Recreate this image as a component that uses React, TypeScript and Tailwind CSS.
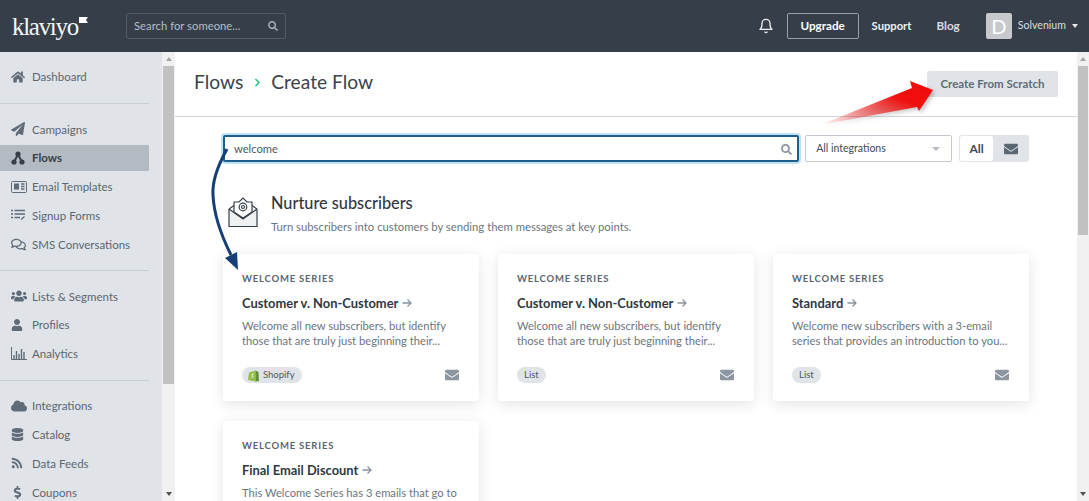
import React from "react";
import {
  FaHome, FaPaperPlane, FaUsers, FaUser, FaCloud, FaDatabase, FaRss, FaDollarSign, FaSearch, FaEnvelope, FaRegComments,
} from "react-icons/fa";
import { FiBell } from "react-icons/fi";

const FONT = "font-['Lato','Open_Sans',sans-serif]";

function FlowsIcon() {
  return (
    <svg width="14" height="14" viewBox="0 0 14 14" fill="none">
      <path d="M7 3.5 3.2 10.5M7 3.5l3.8 7" stroke="#363f49" strokeWidth="2" />
      <circle cx="7" cy="3" r="2.6" fill="#363f49" />
      <circle cx="3" cy="11" r="2.6" fill="#363f49" />
      <circle cx="11" cy="11" r="2.6" fill="#363f49" />
    </svg>
  );
}
function TemplatesIcon() {
  return (
    <svg width="16" height="12" viewBox="0 0 16 12" fill="none" stroke="#5f6b77">
      <rect x="0.5" y="0.5" width="15" height="11" rx="1" />
      <rect x="3" y="2.5" width="5" height="6" fill="#5f6b77" stroke="none" />
      <path d="M10 3h3.500M10 5.500h3.500M10 8h3.500" strokeWidth="1.300" />
    </svg>
  );
}
function FormsIcon() {
  return (
    <svg width="15" height="12" viewBox="0 0 15 12" fill="none" stroke="#5f6b77" strokeWidth="1.300">
      <path d="M0 1.500h2M3.500 1.500H14M0 5h2M3.500 5H14M0 8.500h2M3.500 8.500H9M10 10.500l3.500-3" />
    </svg>
  );
}
function AnalyticsIcon() {
  return (
    <svg width="16" height="13" viewBox="0 0 16 13" fill="none" stroke="#5f6b77">
      <path d="M.5 0v12.500H16" />
      <path d="M3 12V8M5.500 12V4M8 12V7M10.500 12V2M13 12V5" strokeWidth="1.400" />
    </svg>
  );
}

const groups: { label: string; icon: React.ReactNode; active?: boolean }[][] = [
  [{ label: "Dashboard", icon: <FaHome size={14} /> }],
  [
    { label: "Campaigns", icon: <FaPaperPlane size={14} /> },
    { label: "Flows", icon: <FlowsIcon />, active: true },
    { label: "Email Templates", icon: <TemplatesIcon /> },
    { label: "Signup Forms", icon: <FormsIcon /> },
    { label: "SMS Conversations", icon: <FaRegComments size={15} /> },
  ],
  [
    { label: "Lists & Segments", icon: <FaUsers size={16} /> },
    { label: "Profiles", icon: <FaUser size={12} /> },
    { label: "Analytics", icon: <AnalyticsIcon /> },
  ],
  [
    { label: "Integrations", icon: <FaCloud size={16} /> },
    { label: "Catalog", icon: <FaDatabase size={13} /> },
    { label: "Data Feeds", icon: <FaRss size={12} /> },
    { label: "Coupons", icon: <FaDollarSign size={13} /> },
  ],
];

function Sidebar() {
  return (
    <nav className="w-[162px] shrink-0 bg-[#e0e4e8] overflow-hidden">
      <div className="w-[149px]">
        {groups.map((g, i) => (
          <div key={i} className={`pt-[12px] pb-[10.4px] ${i > 0 ? "border-t border-[#c9ced4]" : ""}`}>
            {g.map((it) => (
              <div
                key={it.label}
                className={`h-[26px] mb-[2.75px] flex items-center pl-[11px] text-[11.5px] ${
                  it.active ? "bg-[#b3bac2] text-[#363f49] font-bold" : "text-[#5a6672]"
                }`}
              >
                <span className={`w-[21px] flex justify-start ${it.active ? "text-[#363f49]" : "text-[#5f6b77]"}`}>{it.icon}</span>
                {it.label}
              </div>
            ))}
          </div>
        ))}
      </div>
    </nav>
  );
}

function Scrollbar({ thumb, className }: { thumb: string; className: string }) {
  return (
    <div className={`shrink-0 bg-[#f1f1f1] flex flex-col items-stretch relative ${className}`}>
      <div className="h-[14px] flex items-center justify-center">
        <div className="w-0 h-0 border-x-[3.500px] border-x-transparent border-b-[4px] border-b-[#a3a3a3]" />
      </div>
      <div className={`bg-[#c1c1c1] mx-[1px] ${thumb}`} />
      <div className="flex-1" />
      <div className="h-[14px] flex items-center justify-center">
        <div className="w-0 h-0 border-x-[3.500px] border-x-transparent border-t-[4px] border-t-[#505050]" />
      </div>
    </div>
  );
}

function Card({ title, l1, l2, tag, shopify }: { title: string; l1: string; l2?: string; tag?: string; shopify?: boolean }) {
  return (
    <div className="h-[147px] bg-white rounded-[3px] shadow-[0_3px_14px_rgba(54,63,73,0.14)] px-[19px] pt-[19px] flex flex-col">
      <div className="text-[9.5px] leading-[12px] font-bold tracking-[0.8px] text-[#5a6672]">WELCOME SERIES</div>
      <div className="mt-[9px] h-[18px] text-[12.9px] leading-[18px] font-bold text-[#2f3842] flex items-center">
        {title}
        <svg className="ml-[4px]" width="10" height="10" viewBox="0 0 10 10" fill="none" stroke="#8a939c" strokeWidth="1.300">
          <path d="M.5 5h8.500M5.500 1.500 9 5 5.500 8.500" />
        </svg>
      </div>
      <div className="mt-[7px] text-[11.2px] leading-[14.5px] text-[#6b7580] whitespace-nowrap">
        <div>{l1}</div>
        <div>{l2}</div>
      </div>
      <div className="mt-auto mb-[18px] flex items-center justify-between">
        <span className="h-[16px] rounded-full bg-[#e0e4e8] px-[7px] text-[9.5px] text-[#4d5864] flex items-center">
          {shopify && (
            <svg className="mr-[4px] -ml-[1px]" width="11" height="13" viewBox="0 0 11 13">
              <path d="M1 3.500 7.500 1.500V12.500L0 11z" fill="#95bf47" />
              <path d="M7.500 1.500 10.500 3 11 12 7.500 12.500z" fill="#5e8e3e" />
              <path d="M5.500 5c-1.500-.4-2.200 1-1 1.800 1 .7.500 2-1 1.400" fill="none" stroke="#fff" strokeWidth=".9" />
            </svg>
          )}
          {tag}
        </span>
        <FaEnvelope size={14} className="text-[#8c95a0] mr-[1px]" />
      </div>
    </div>
  );
}

export default function App() {
  return (
    <div className={`h-[501px] w-full overflow-hidden flex flex-col relative bg-white ${FONT}`}>
      <header className="h-[52px] shrink-0 bg-[#363f49] flex items-center pl-[12px] pr-[11px] text-white">
        <div className="w-[114px] flex items-start relative">
          <span className="font-['Liberation_Serif',serif] text-[25px] leading-none tracking-[-1.3px] text-[#f4f5f6]">klaviyo</span>
          <svg className="mt-[3px] ml-[1px]" width="9" height="7" viewBox="0 0 9 7"><path d="M0 0h9L7 3l2 3H0z" fill="#fff" /></svg>
        </div>
        <div className="w-[160px] h-[26px] border border-[#525c67] rounded-[2px] flex items-center justify-between pl-[7px] pr-[7px] text-[11.3px] text-[#b5bcc4]">
          <span>Search for someone...</span>
          <FaSearch size={10} className="text-[#a4acb5]" />
        </div>
        <div className="ml-auto flex items-center">
          <FiBell size={16} className="mr-[13px] text-[#f0f1f2]" />
          <div className="w-[72px] h-[26px] border border-[#99a0a8] rounded-[2px] flex items-center justify-center text-[11.7px] font-bold">Upgrade</div>
          <span className="ml-[13px] text-[11.2px] font-bold text-[#eef0f2]">Support</span>
          <span className="ml-[25px] text-[11.7px] font-bold text-[#d8dde2]">Blog</span>
          <div className="ml-[26px] w-[26px] h-[26px] rounded-[2px] bg-[#c7c9cc] flex items-center justify-center text-[20px] text-white">D</div>
          <span className="ml-[6px] text-[10.6px] text-[#d8dde2]">Solvenium</span>
          <span className="ml-[6px] w-0 h-0 border-x-[3.500px] border-x-transparent border-t-[4px] border-t-[#e6e8ea]" />
        </div>
      </header>
      <div className="flex-1 flex min-h-0">
        <Sidebar />
        <Scrollbar className="w-[13px]" thumb="h-[318px]" />
        <main className="flex-1 min-w-0 overflow-hidden">
          <div className="h-[65px] border-b border-[#d0d5da] flex items-center justify-between pl-[19px] pr-[19px]">
            <div className="flex items-center text-[19.2px] text-[#3a434d] pb-[3px]">
              <span>Flows</span>
              <svg className="mx-[10.5px]" width="7" height="9" viewBox="0 0 7 9" fill="none" stroke="#22c77f" strokeWidth="1.500"><path d="M1.500 1 5 4.500 1.500 8" /></svg>
              <span>Create Flow</span>
            </div>
            <div className="w-[131px] h-[26px] rounded-[2px] bg-[#e0e4e8] flex items-center justify-center text-[11.5px] font-bold text-[#5f6b77]">Create From Scratch</div>
          </div>
          <div className="pl-[48px] w-[854px]">
            <div className="mt-[18px] flex">
              <div className="w-[577px] h-[27px] rounded-[2px] border-2 border-[#1f5d8a] ring-2 ring-[#bfe3f5] flex items-center justify-between pl-[9px] pr-[5px] pt-[1px] text-[11.2px] text-[#4d5864]">
                <span>welcome</span>
                <FaSearch size={11} className="text-[#8c95a0]" />
              </div>
              <div className="ml-[6px] w-[147px] h-[27px] rounded-[2px] border border-[#c3c9cf] flex items-center justify-between pl-[10px] pr-[11px] pt-[1px] text-[10.5px] text-[#414b56]">
                <span>All integrations</span>
                <span className="w-0 h-0 border-x-[4px] border-x-transparent border-t-[4px] border-t-[#b3bac2]" />
              </div>
              <div className="ml-[7px] w-[70px] h-[27px] rounded-[3px] bg-[#e0e4e8] flex items-center p-[1px]">
                <div className="w-[33px] h-full bg-white rounded-[2px] flex items-center justify-center text-[12px] font-bold text-[#414b56]">All</div>
                <div className="flex-1 flex justify-center"><FaEnvelope size={14} className="text-[#5a6672]" /></div>
              </div>
            </div>
            <div className="mt-[31px] flex">
              <svg className="ml-[5px] mt-[3px]" width="30" height="32" viewBox="0 0 30 32" fill="none" stroke="#363f49" strokeWidth="1.200">
                <path d="M1 13v17.500h28V13" fill="#eef0f2" />
                <path d="M1 13l5-3.500M29 13l-5-3.500" />
                <path d="M6 16V6h5l4-4 4 4h5v10l-9 6z" fill="#fff" />
                <path d="M1 13l14 10 14-10" />
                <circle cx="15" cy="11" r="3.800" />
                <circle cx="15" cy="11" r="1.500" />
              </svg>
              <div className="ml-[13px]">
                <div className="text-[16.3px] leading-[20px] font-medium text-[#2f3842]">Nurture subscribers</div>
                <div className="mt-[6px] text-[11.3px] leading-[16px] text-[#6b7580]">Turn subscribers into customers by sending them messages at key points.</div>
              </div>
            </div>
            <div className="mt-[19px] grid grid-cols-[256px_256px_256px] gap-x-[19px] gap-y-[20px]">
              <Card title="Customer v. Non-Customer" l1="Welcome all new subscribers, but identify" l2="those that are truly just beginning their..." tag="Shopify" shopify />
              <Card title="Customer v. Non-Customer" l1="Welcome all new subscribers, but identify" l2="those that are truly just beginning their..." tag="List" />
              <Card title="Standard" l1="Welcome new subscribers with a 3-email" l2="series that provides an introduction to you..." tag="List" />
              <Card title="Final Email Discount" l1="This Welcome Series has 3 emails that go to" />
            </div>
          </div>
        </main>
        <Scrollbar className="w-[12px]" thumb="h-[169px]" />
      </div>

      {/* red annotation arrow */}
      <svg className="absolute left-[815px] top-[75px] pointer-events-none drop-shadow-[2px_2px_2px_rgba(0,0,0,0.25)]" width="125" height="55" viewBox="0 0 125 55">
        <defs>
          <linearGradient id="redfade" x1="0" y1="1" x2="1" y2="0">
            <stop offset="0" stopColor="#f03030" stopOpacity="0" />
            <stop offset="0.65" stopColor="#f01010" />
            <stop offset="1" stopColor="#f00a0a" />
          </linearGradient>
        </defs>
        <path d="M5 50 L97 13 L95 6 L118 15 L104 36 L102 32 Z" fill="url(#redfade)" />
      </svg>
      {/* blue annotation arrow */}
      <svg className="absolute left-[205px] top-[145px] pointer-events-none" width="40" height="130" viewBox="0 0 40 130" fill="none">
        <path d="M22 4C12 22 7 36 8 50c1 22 9 42 18 60" stroke="#163f78" strokeWidth="3" />
        <path d="M33 125 20 113l12-6z" fill="#163f78" />
      </svg>
    </div>
  );
}
